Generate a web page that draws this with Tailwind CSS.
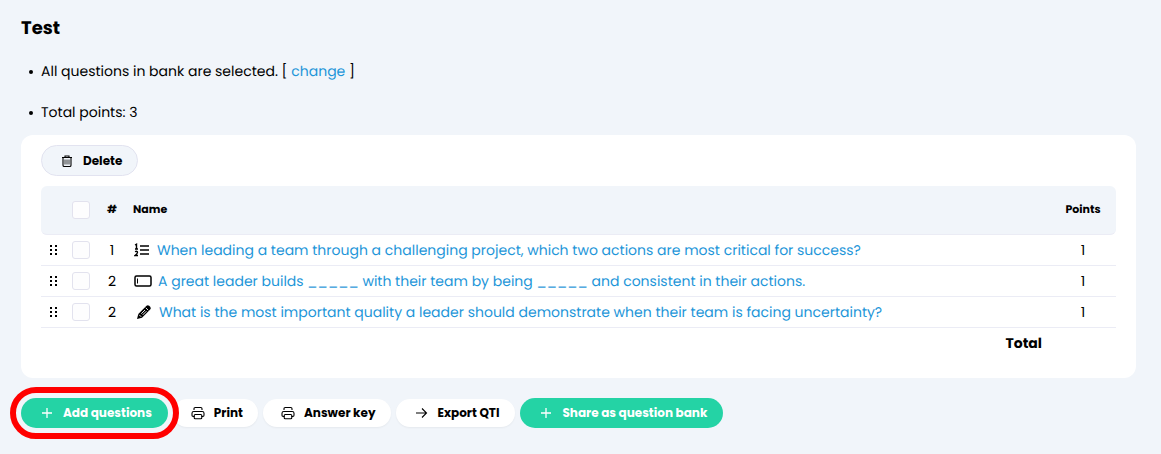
<!DOCTYPE html>
<html lang="en">
<head>
    <meta charset="UTF-8">
    <meta name="viewport" content="width=device-width, initial-scale=1.0">
    <title>Test</title>
    <script src="https://cdn.jsdelivr.net/npm/@tailwindcss/browser@4"></script>
</head>
<body class="min-h-screen bg-[#f1f5fa] font-['Poppins','Inter',sans-serif] text-sm text-black [text-rendering:geometricPrecision]">
    <!-- Shared icons -->
    <svg class="hidden">
        <symbol id="grip" viewBox="0 0 8 12">
            <path fill="currentColor" d="M0 1h2v2H0zM5 1h2v2H5zM0 5h2v2H0zM5 5h2v2H5zM0 9h2v2H0zM5 9h2v2H5z"/>
        </symbol>
        <symbol id="plus" viewBox="0 0 12 12">
            <path d="M6 1v10M1 6h10" fill="none" stroke="currentColor" stroke-width="1.3"/>
        </symbol>
        <symbol id="printer" viewBox="0 0 14 14">
            <g fill="none" stroke="currentColor" stroke-width="1.1" stroke-linejoin="round">
                <path d="M3 4V2.700Q3 1.500 4.200 1.500h5.600Q11 1.500 11 2.700V4"/>
                <path d="M3.500 10.500H2.200Q1 10.500 1 9.300V7.200Q1 5.500 2.700 5.500h8.600Q13 5.500 13 7.200v2.100q0 1.200-1.200 1.200h-1.300"/>
                <rect x="3.200" y="8.500" width="7.600" height="4.200" rx="1"/>
            </g>
        </symbol>
    </svg>

    <main class="pl-[21px] pr-[25px] pt-[17px] pb-6">
        <h1 class="text-lg leading-6 font-bold">Test</h1>

        <ul class="mt-5 space-y-5 pl-2 leading-[21px]">
            <li class="flex items-center gap-2 before:h-1 before:w-1 before:rounded-full before:bg-black">
                <span>All questions in bank are selected. [ <a href="#" class="text-[#1e96d9]">change</a> ]</span>
            </li>
            <li class="flex items-center gap-2 before:h-1 before:w-1 before:rounded-full before:bg-black">
                <span>Total points: 3</span>
            </li>
        </ul>

        <section class="mt-3 rounded-xl bg-white px-5 pt-[10px] pb-5">
            <button class="flex h-[31px] items-center gap-[10px] rounded-full border border-[#e2e3f0] bg-[#f1f5fa] pr-[15px] pl-[19px] text-xs font-bold">
                <svg class="h-3 w-3" viewBox="0 0 12 12" fill="none" stroke="currentColor" stroke-width="1.1">
                    <path d="M1 2.500h10M4 2.300V1h4v1.300M2 2.500v7.700q0 1.300 1.300 1.300h5.400q1.300 0 1.300-1.300V2.500"/>
                    <path d="M4 4.500v5M6 4.500v5M8 4.500v5" stroke-width=".8"/>
                </svg>
                Delete
            </button>

            <table class="mt-[10px] w-full table-fixed border-separate border-spacing-0">
                <colgroup>
                    <col class="w-[25px]">
                    <col class="w-[30px]">
                    <col class="w-[32px]">
                    <col>
                    <col class="w-[66px]">
                </colgroup>
                <thead>
                    <tr class="h-[49px] bg-[#f1f5fa] text-[11px]">
                        <th class="rounded-l-md border-b border-[#ebecf5]"></th>
                        <th class="border-b border-[#ebecf5]">
                            <input type="checkbox" aria-label="Select all" class="mx-auto block h-[18px] w-[18px] appearance-none rounded-[3px] border border-[#e2e2ee] bg-[#fdfdfe]">
                        </th>
                        <th class="border-b border-[#ebecf5]">#</th>
                        <th class="border-b border-[#ebecf5] pl-[5px] text-left">Name</th>
                        <th class="rounded-r-md border-b border-[#ebecf5]">Points</th>
                    </tr>
                </thead>
                <tbody>
                    <tr class="h-[31px]">
                        <td class="border-b border-[#ebecf5]"><svg class="mx-auto h-3 w-2"><use href="#grip"/></svg></td>
                        <td class="border-b border-[#ebecf5]">
                            <input type="checkbox" aria-label="Select question 1" class="mx-auto block h-[18px] w-[18px] appearance-none rounded-[3px] border border-[#e2e2ee] bg-[#fdfdfe]">
                        </td>
                        <td class="border-b border-[#ebecf5] text-center">1</td>
                        <td class="border-b border-[#ebecf5] pl-[6px]">
                            <div class="flex items-center gap-[7px]">
                                <svg class="h-[14px] w-4 shrink-0" viewBox="0 0 16 14" fill="none" stroke="currentColor" stroke-width="1.400">
                                    <path d="M6 3h9M6 7h9M6 11h9M1 2l1.500-.8V6M1 6h3M1 8.700q2.500-1 2.500.5Q3.500 10.500 1 12.500h3"/>
                                </svg>
                                <a href="#" class="text-[#1e96d9]">When leading a team through a challenging project, which two actions are most critical for success?</a>
                            </div>
                        </td>
                        <td class="border-b border-[#ebecf5] text-center">1</td>
                    </tr>
                    <tr class="h-[31px]">
                        <td class="border-b border-[#ebecf5]"><svg class="mx-auto h-3 w-2"><use href="#grip"/></svg></td>
                        <td class="border-b border-[#ebecf5]">
                            <input type="checkbox" aria-label="Select question 2" class="mx-auto block h-[18px] w-[18px] appearance-none rounded-[3px] border border-[#e2e2ee] bg-[#fdfdfe]">
                        </td>
                        <td class="border-b border-[#ebecf5] text-center">2</td>
                        <td class="border-b border-[#ebecf5] pl-[6px]">
                            <div class="flex items-center gap-[6px]">
                                <svg class="h-3 w-[18px] shrink-0" viewBox="0 0 18 12" fill="none" stroke="currentColor">
                                    <rect x="1" y="1" width="16" height="10" rx="1.500" stroke-width="1.500"/>
                                    <path d="M3.500 3.500v5"/>
                                </svg>
                                <a href="#" class="text-[#1e96d9]">A great leader builds _____ with their team by being _____ and consistent in their actions.</a>
                            </div>
                        </td>
                        <td class="border-b border-[#ebecf5] text-center">1</td>
                    </tr>
                    <tr class="h-[31px]">
                        <td class="border-b border-[#ebecf5]"><svg class="mx-auto h-3 w-2"><use href="#grip"/></svg></td>
                        <td class="border-b border-[#ebecf5]">
                            <input type="checkbox" aria-label="Select question 3" class="mx-auto block h-[18px] w-[18px] appearance-none rounded-[3px] border border-[#e2e2ee] bg-[#fdfdfe]">
                        </td>
                        <td class="border-b border-[#ebecf5] text-center">2</td>
                        <td class="border-b border-[#ebecf5] pl-2">
                            <div class="flex items-center gap-[7px]">
                                <svg class="h-4 w-4 shrink-0" viewBox="0 0 16 16">
                                    <path fill="currentColor" d="M1 15l1.300-5L10.500 1.800q1.300-1.300 2.700 0l1 1q1.300 1.400 0 2.700L6 13.700z"/>
                                    <path fill="none" stroke="white" stroke-width=".9" d="M9.800 3.800l2.400 2.400M3.200 10.800l2 2M5.300 9.700l3.700-3.700M6.700 10.900l3.700-3.700"/>
                                </svg>
                                <a href="#" class="text-[#1e96d9]">What is the most important quality a leader should demonstrate when their team is facing uncertainty?</a>
                            </div>
                        </td>
                        <td class="border-b border-[#ebecf5] text-center">1</td>
                    </tr>
                </tbody>
                <tfoot>
                    <tr class="h-[30px]">
                        <th colspan="4" class="pr-2 text-right text-sm font-bold">Total</th>
                        <td></td>
                    </tr>
                </tfoot>
            </table>
        </section>

        <div class="mt-5 flex items-center gap-[5px] text-xs font-bold">
            <div class="relative">
                <button class="flex h-[30px] items-center gap-[10px] rounded-full bg-[#24d3a5] pr-4 pl-5 text-white">
                    <svg class="h-3 w-3"><use href="#plus"/></svg>
                    Add questions
                </button>
                <div class="pointer-events-none absolute -inset-[11px] z-10 rounded-full border-6 border-[#ff0000]"></div>
            </div>
            <button class="flex h-7 items-center gap-[9px] rounded-full bg-white pr-[15px] pl-[18px] shadow-xs">
                <svg class="h-[14px] w-[14px]"><use href="#printer"/></svg>
                Print
            </button>
            <button class="flex h-7 items-center gap-[9px] rounded-full bg-white pr-4 pl-[18px] shadow-xs">
                <svg class="h-[14px] w-[14px]"><use href="#printer"/></svg>
                Answer key
            </button>
            <button class="flex h-7 items-center gap-[9px] rounded-full bg-white pr-4 pl-[18px] shadow-xs">
                <svg class="h-[14px] w-[14px]" viewBox="0 0 14 14" fill="none" stroke="currentColor" stroke-width="1.100">
                    <path d="M2 7h10.500M8 2.500L12.500 7 8 11.500"/>
                </svg>
                Export QTI
            </button>
            <button class="flex h-[30px] items-center gap-[10px] rounded-full bg-[#24d3a5] pr-4 pl-5 text-white">
                <svg class="h-3 w-3"><use href="#plus"/></svg>
                Share as question bank
            </button>
        </div>
    </main>
</body>
</html>
